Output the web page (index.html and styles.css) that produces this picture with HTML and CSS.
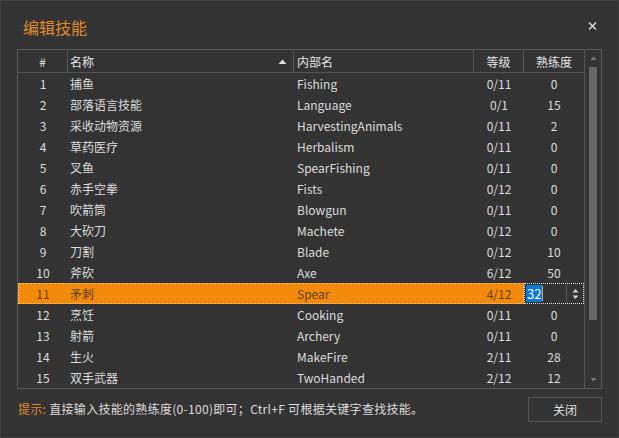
FILE: index.html
```html
<!DOCTYPE html>
<html lang="zh-CN">
<head>
<meta charset="utf-8">
<title>编辑技能</title>
<link rel="stylesheet" href="styles.css">
</head>
<body>
<div class="window">
  <div class="titlebar">
    <div class="title">编辑技能</div>
    <svg class="close" width="9" height="8" viewBox="0 0 9 8"><path d="M1 0.5 L8 7.5 M8 0.5 L1 7.5" stroke="#d8d8d8" stroke-width="1.5" fill="none"/></svg>
  </div>
  <div class="table">
    <div class="grid">
      <div class="head">
        <div class="hc center">#</div>
        <div class="hc left sort">名称<svg class="arrow" width="9" height="5" viewBox="0 0 9 5"><path d="M0.5 5 L4.5 0.5 L8.5 5 Z" fill="#e0e0e0"/></svg></div>
        <div class="hc left2">内部名</div>
        <div class="hc center">等级</div>
        <div class="hc center last">熟练度</div>
      </div>
      <div class="body">
        <div class="row"><div class="c center">1</div><div class="c left">捕鱼</div><div class="c left2">Fishing</div><div class="c center">0/11</div><div class="c center">0</div></div>
        <div class="row"><div class="c center">2</div><div class="c left">部落语言技能</div><div class="c left2">Language</div><div class="c center">0/1</div><div class="c center">15</div></div>
        <div class="row"><div class="c center">3</div><div class="c left">采收动物资源</div><div class="c left2">HarvestingAnimals</div><div class="c center">0/11</div><div class="c center">2</div></div>
        <div class="row"><div class="c center">4</div><div class="c left">草药医疗</div><div class="c left2">Herbalism</div><div class="c center">0/11</div><div class="c center">0</div></div>
        <div class="row"><div class="c center">5</div><div class="c left">叉鱼</div><div class="c left2">SpearFishing</div><div class="c center">0/11</div><div class="c center">0</div></div>
        <div class="row"><div class="c center">6</div><div class="c left">赤手空拳</div><div class="c left2">Fists</div><div class="c center">0/12</div><div class="c center">0</div></div>
        <div class="row"><div class="c center">7</div><div class="c left">吹箭筒</div><div class="c left2">Blowgun</div><div class="c center">0/11</div><div class="c center">0</div></div>
        <div class="row"><div class="c center">8</div><div class="c left">大砍刀</div><div class="c left2">Machete</div><div class="c center">0/12</div><div class="c center">0</div></div>
        <div class="row"><div class="c center">9</div><div class="c left">刀割</div><div class="c left2">Blade</div><div class="c center">0/12</div><div class="c center">10</div></div>
        <div class="row"><div class="c center">10</div><div class="c left">斧砍</div><div class="c left2">Axe</div><div class="c center">6/12</div><div class="c center">50</div></div>
        <div class="row selected">
          <div class="selpart"><div class="c center">11</div><div class="c left">矛刺</div><div class="c left2">Spear</div><div class="c center">4/12</div></div>
          <div class="editor">
            <div class="edit-text"><span class="sel">32</span><span class="caret"></span></div>
            <div class="spin">
              <svg width="7" height="12" viewBox="0 0 7 12"><path d="M0.5 4.5 L3.5 1 L6.5 4.5 Z" fill="#d0d0d0"/><path d="M0.5 7.5 L3.5 11 L6.5 7.5 Z" fill="#d0d0d0"/></svg>
            </div>
          </div>
        </div>
        <div class="row"><div class="c center">12</div><div class="c left">烹饪</div><div class="c left2">Cooking</div><div class="c center">0/11</div><div class="c center">0</div></div>
        <div class="row"><div class="c center">13</div><div class="c left">射箭</div><div class="c left2">Archery</div><div class="c center">0/11</div><div class="c center">0</div></div>
        <div class="row"><div class="c center">14</div><div class="c left">生火</div><div class="c left2">MakeFire</div><div class="c center">2/11</div><div class="c center">28</div></div>
        <div class="row"><div class="c center">15</div><div class="c left">双手武器</div><div class="c left2">TwoHanded</div><div class="c center">2/12</div><div class="c center">12</div></div>
      </div>
    </div>
    <div class="scrollbar">
      <div class="sb-btn"><svg width="7" height="4" viewBox="0 0 7 4"><path d="M0.5 4 L3.5 0.5 L6.5 4 Z" fill="#7a7a7a"/></svg></div>
      <div class="sb-track"><div class="thumb"></div></div>
      <div class="sb-btn"><svg width="7" height="4" viewBox="0 0 7 4"><path d="M0.5 0 L3.5 3.5 L6.5 0 Z" fill="#7a7a7a"/></svg></div>
    </div>
  </div>
  <div class="footer">
    <div class="hint"><span class="hint-label">提示:</span> 直接输入技能的熟练度(0-100)即可；Ctrl+F 可根据关键字查找技能。</div>
    <button class="btn">关闭</button>
  </div>
</div>
</body>
</html>
```

FILE: styles.css
```css
* { box-sizing: border-box; }
html, body { margin: 0; padding: 0; background: #333333; }
body {
  font-family: "Noto Sans CJK SC", "Noto Sans", sans-serif;
  font-size: 12px;
  color: #dcdcdc;
}
.window {
  width: 619px;
  height: 438px;
  border: 1px solid #404040;
  background: #333333;
  display: flex;
  flex-direction: column;
}
.titlebar {
  height: 48px;
  display: flex;
  align-items: center;
  justify-content: space-between;
  padding: 4px 21px 0 22px;
}
.title {
  font-size: 16px;
  line-height: 16px;
  color: #e08a2c;
}
.close { display: block; margin-top: -2px; }
.table {
  margin: 0 16px;
  width: 585px;
  height: 340px;
  border: 1px solid #5a5a5a;
  display: flex;
}
.grid { width: 566px; display: flex; flex-direction: column; }
.head {
  display: grid;
  grid-template-columns: 50px 226px 180px 50px 60px;
  height: 23px;
  border-bottom: 1px solid #555555;
  color: #e4e4e4;
}
.hc {
  border-right: 1px solid #555555;
  display: flex;
  align-items: center;
  line-height: 22px;
  padding-top: 1px;
  white-space: nowrap;
}
.hc.last { border-right: none; }
.center { justify-content: center; text-align: center; }
.left { padding-left: 2px; }
.left2 { padding-left: 3px; }
.sort { justify-content: space-between; padding-right: 6px; }
.arrow { display: block; margin-top: -1px; }
.body { height: 315px; overflow: hidden; }
.row {
  display: grid;
  grid-template-columns: 50px 226px 180px 50px 60px;
  height: 21px;
}
.c {
  display: flex;
  align-items: center;
  line-height: 21px;
  white-space: nowrap;
}
.row.selected { grid-template-columns: 506px 60px; }
.selpart {
  display: grid;
  grid-template-columns: 50px 226px 180px 50px;
  background: #f38a0c;
  color: #5e4020;
  outline: 1px dotted #f9c98a;
  outline-offset: -1px;
}
.selpart .c { line-height: 21px; }
.editor {
  display: flex;
  align-items: center;
  border: 1px dotted #e8e8e8;
  background: #333333;
  padding: 1px 0 1px 1px;
}
.edit-text {
  flex: 1;
  display: flex;
  align-items: center;
  height: 17px;
}
.sel {
  background: #0a78d6;
  color: #ffffff;
  height: 17px;
  line-height: 17px;
  padding: 0 1px 0 1px;
  font-size: 13px;
}
.caret { width: 1px; height: 15px; background: #e0a060; }
.spin {
  width: 17px;
  height: 17px;
  border-left: 1px solid #5a5a5a;
  display: flex;
  align-items: center;
  justify-content: center;
}
.spin svg { display: block; }
.scrollbar {
  width: 17px;
  border-left: 1px solid #555555;
  display: flex;
  flex-direction: column;
}
.sb-btn {
  height: 16px;
  display: flex;
  align-items: center;
  justify-content: center;
}
.sb-btn svg { display: block; }
.sb-track { flex: 1; padding: 1px 4px 0 4px; }
.thumb { height: 253px; background: #676767; }
.footer {
  display: flex;
  justify-content: space-between;
  align-items: center;
  padding: 7px 16px 0 17px;
  height: 33px;
}
.hint { white-space: nowrap; line-height: 16px; letter-spacing: 0.3px; }
.hint-label { color: #e08a2c; }
.btn {
  width: 74px;
  height: 25px;
  border: 1px solid #555555;
  background: #333333;
  color: #e0e0e0;
  font-family: "Noto Sans CJK SC", "Noto Sans", sans-serif;
  font-size: 12px;
  padding: 0;
}
```
